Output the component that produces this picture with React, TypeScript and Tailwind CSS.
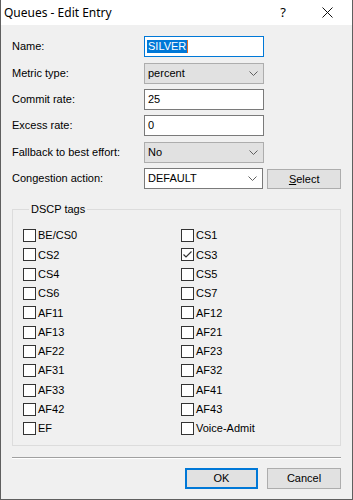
import React from "react"

const tags: [string, string][] = [
  ["BE/CS0", "CS1"],
  ["CS2", "CS3"],
  ["CS4", "CS5"],
  ["CS6", "CS7"],
  ["AF11", "AF12"],
  ["AF13", "AF21"],
  ["AF22", "AF23"],
  ["AF31", "AF32"],
  ["AF33", "AF41"],
  ["AF42", "AF43"],
  ["EF", "Voice-Admit"],
]

const checked = new Set(["CS3"])

function Chevron() {
  return (
    <svg width="9" height="6" viewBox="0 0 9 6" className="shrink-0">
      <polyline points="0.5,0.5 4.5,4.5 8.5,0.5" fill="none" stroke="#606060" strokeWidth="1" />
    </svg>
  )
}

function Check({ label }: { label: string }) {
  const on = checked.has(label)
  return (
    <div className="flex items-center h-[19.3px]">
      <div className="w-[13px] h-[13px] border border-[#333333] bg-white flex items-center justify-center">
        {on && (
          <svg width="11" height="11" viewBox="0 0 11 11">
            <polyline points="1.5,5.5 4,8 9.5,2.5" fill="none" stroke="#333333" strokeWidth="1.2" />
          </svg>
        )}
      </div>
      <span className="ml-[2px]">{label}</span>
    </div>
  )
}

function Row({ label, className, children }: { label: string; className?: string; children: React.ReactNode }) {
  return (
    <div className={"flex items-center h-[21px] " + (className ?? "")}>
      <span className="w-[132px] shrink-0">{label}</span>
      {children}
    </div>
  )
}

function Combo({ value, white }: { value: string; white?: boolean }) {
  return (
    <div
      className={
        white
          ? "w-[120px] h-[21px] border border-[#7a7a7a] bg-white flex items-center justify-between pl-[3px] pr-[5px]"
          : "w-[120px] h-[21px] border border-[#adadad] bg-[#e1e1e1] flex items-center justify-between pl-[3px] pr-[5px]"
      }
    >
      <span>{value}</span>
      <Chevron />
    </div>
  )
}

function Field({ value }: { value: string }) {
  return (
    <div className="w-[120px] h-[21px] border border-[#7a7a7a] bg-white flex items-center pl-[3px]">
      {value}
    </div>
  )
}

export default function App() {
  return (
    <div
      className="w-[353px] h-[500px] flex flex-col bg-[#f0f0f0] border-x border-b border-[#5f5f5f] text-[11px] text-black"
      style={{ fontFamily: '"Liberation Sans", Arial, sans-serif' }}
    >
      <div className="h-[25px] bg-white flex items-center shrink-0">
        <span className="ml-[3px] text-[12px]" style={{ fontFamily: '"Noto Sans", sans-serif' }}>
          Queues - Edit Entry
        </span>
        <span className="ml-auto text-[13px] mr-[36px]" style={{ fontFamily: '"Noto Sans", sans-serif' }}>
          ?
        </span>
        <svg width="11" height="11" viewBox="0 0 11 11" className="mr-[19px]">
          <path d="M0.5 0.5L10.5 10.5M10.5 0.5L0.5 10.5" stroke="#111111" strokeWidth="1" />
        </svg>
      </div>

      <div className="flex flex-col px-[11px] pt-[11px]">
        <div className="flex flex-col">
          <Row label="Name:">
            <div className="w-[120px] h-[21px] border border-[#0078d7] bg-white flex items-center pl-[2px]">
              <span className="bg-[#0078d7] text-white px-[1px] leading-[13px]">SILVER</span>
              <span className="w-px h-[13px] bg-[#e06a28]" />
            </div>
          </Row>
          <Row label="Metric type:" className="mt-[6px]">
            <Combo value="percent" />
          </Row>
          <Row label="Commit rate:" className="mt-[5px]">
            <Field value="25" />
          </Row>
          <Row label="Excess rate:" className="mt-[5px]">
            <Field value="0" />
          </Row>
          <Row label="Fallback to best effort:" className="mt-[6px]">
            <Combo value="No" />
          </Row>
          <Row label="Congestion action:" className="mt-[5px]">
            <Combo value="DEFAULT" white />
            <button className="ml-[4px] w-[74px] h-[20px] mt-[1px] border border-[#adadad] bg-[#e1e1e1] flex items-center justify-center">
              <span>
                <span className="underline">S</span>elect
              </span>
            </button>
          </Row>
        </div>

        <fieldset className="mt-[14px] border border-[#dcdcdc] px-[10px] pb-[4px] pt-[10px] h-[243px]">
          <legend className="ml-[6px] px-[2px] leading-[13px]">DSCP tags</legend>
          <div className="grid grid-cols-[158px_1fr]">
            {tags.map(([a, b]) => (
              <React.Fragment key={a}>
                <Check label={a} />
                <Check label={b} />
              </React.Fragment>
            ))}
          </div>
        </fieldset>

        <div className="mt-[11px] border-t border-[#a0a0a0] border-b border-b-white" />

        <div className="flex justify-end gap-[9px] mt-[9px]">
          <button className="w-[73px] h-[21px] border-2 border-[#0078d7] bg-[#e1e1e1]">OK</button>
          <button className="w-[74px] h-[21px] border border-[#adadad] bg-[#e1e1e1]">Cancel</button>
        </div>
      </div>
    </div>
  )
}
